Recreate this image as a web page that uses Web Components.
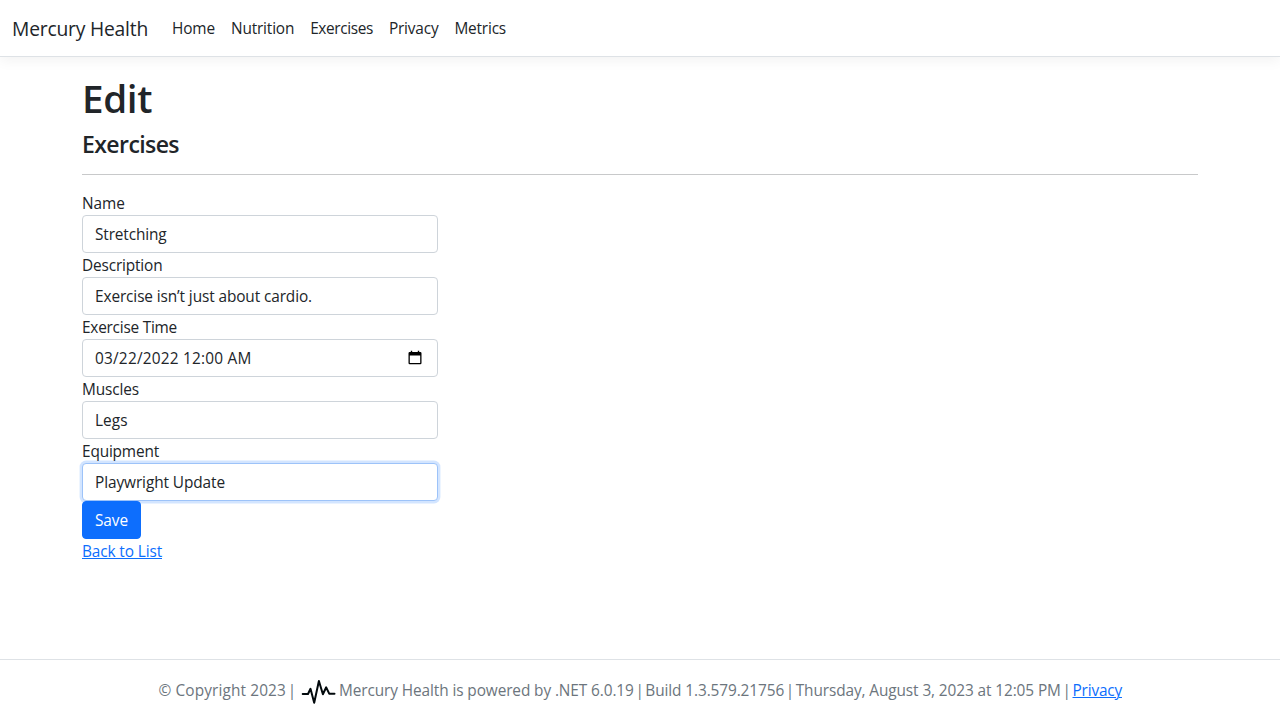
<!DOCTYPE html>
<html lang="en">
<head>
<meta charset="utf-8">
<title>Edit - Mercury Health</title>
<style>
html,body{margin:0;height:100%}
body{font:15.4px/24px "Open Sans","Noto Sans",sans-serif;color:#212529;background:#fff}
</style>
</head>
<body>
<mh-app></mh-app>
<script>
const define = (name, html, after) => customElements.define(name, class extends HTMLElement {
  constructor() {
    super();
    const t = document.createElement('template');
    t.innerHTML = html;
    this.attachShadow({mode: 'open'}).append(t.content.cloneNode(true));
  }
  connectedCallback() { if (after) after.call(this); }
});

/* Text run tracked so that it fills the width given in "w". */
define('mh-text', `<style>:host{display:block;width:max-content;white-space:pre;line-height:inherit;padding-top:1px;margin-bottom:-1px}</style><slot></slot>`, function () {
  const w = parseFloat(this.getAttribute('w'));
  this.style.letterSpacing = '0px';
  const natural = this.getBoundingClientRect().width;
  this.style.letterSpacing = ((w - natural) / this.textContent.length).toFixed(4) + 'px';
  this.style.width = w + 'px';
});

define('mh-navbar', `<style>
:host{display:flex;box-sizing:border-box;height:57px;padding:0 12px;align-items:center;background:#fff;border-bottom:1px solid #dee2e6;box-shadow:0 4px 12px rgba(0,0,0,.05)}
.brand{display:block;font-size:19.3px;line-height:30px;margin-right:16px}
nav{display:flex}
</style><span class="brand"><slot name="brand"></slot></span><nav><slot></slot></nav>`);

define('mh-nav-link', `<style>:host{display:block;padding:8px}a{color:inherit;text-decoration:none;display:block}</style><a href="#"><slot></slot></a>`);

define('mh-field', `<style>
:host{display:block;width:356px}
label{display:block;height:24px}
.control{display:flex;align-items:center;justify-content:space-between;box-sizing:border-box;height:38px;padding:6px 12px;border:1px solid #ced4da;border-radius:4px;background:#fff}
:host([focused]) .control{position:relative;border-color:#9dc3f9;box-shadow:0 0 0 2.4px rgba(13,110,253,.18)}
</style><label><slot name="label"></slot></label><div class="control"><slot></slot><slot name="icon"></slot></div>`);

define('mh-calendar-icon', `<style>:host{display:block;width:14px;height:16px;margin-right:3px}svg{display:block}</style>
<svg width="14" height="16" viewBox="0 0 14 16"><path fill="#000" fill-rule="evenodd" d="M2.8 .7h1.4V2h5.6V.7h1.4V2h1.1q1.2 0 1.2 1.2v9.9q0 1.2-1.2 1.2H1.7q-1.2 0-1.2-1.2V3.2Q.5 2 1.7 2h1.1zM1.8 5.5V13h10.4V5.5z"/></svg>`);

define('mh-button', `<style>:host{display:block}button{display:block;font:inherit;color:#fff;background:#0d6efd;border:1px solid #0d6efd;border-radius:4px;padding:6px 12px;height:38px;margin:0}</style><button type="button"><slot></slot></button>`);

define('mh-link', `<style>:host{display:block;width:max-content}a{display:block;color:#0d6efd;text-decoration:none}a ::slotted(*){text-decoration:underline;text-underline-offset:1px;text-decoration-thickness:1px}</style><a href="#"><slot></slot></a>`);

define('mh-pulse', `<style>:host{display:block;width:36px;height:28px}svg{display:block}</style>
<svg width="36" height="28" viewBox="300 678 36 28" fill="none" stroke="#02090c" stroke-width="2" stroke-linecap="round" stroke-linejoin="round"><path d="M302.7 694H308l2.5-5.2 3.7 14L318.9 681l4 13.3 3.3-7 3 6.4h5.3"/></svg>`);

define('mh-footer', `<style>:host{display:flex;box-sizing:border-box;height:61px;border-top:1px solid #dee2e6;color:#6c757d;padding-left:158.5px;align-items:center;line-height:60px}mh-pulse{margin:4px 3px 0 6px}.bar{margin:0 -2.3px}</style>
<mh-text w="135.5">© Copyright 2023 <span class="bar">|</span></mh-text><mh-pulse></mh-pulse><mh-text w="729.5">Mercury Health is powered by .NET 6.0.19 <span class="bar">|</span> Build 1.3.579.21756 <span class="bar">|</span> Thursday, August 3, 2023 at 12:05 PM <span class="bar">|</span></mh-text><mh-link style="margin-left:4px"><mh-text w="49.5">Privacy</mh-text></mh-link>`);

define('mh-app', `<style>
:host{display:flex;flex-direction:column;height:720px}
main{flex:1;padding:16px 82px 0}
h1,h4{margin:0 0 8px;font-weight:560;line-height:1.2}
h1{font-size:38.6px;height:48px;line-height:48px}h4{font-size:23px;height:28.8px;line-height:28.8px}
hr{margin:16px 0;border:0;height:1px;background:#c8c9ca}
</style>
<mh-navbar><mh-text slot="brand" w="136">Mercury Health</mh-text>
<mh-nav-link><mh-text w="43">Home</mh-text></mh-nav-link><mh-nav-link><mh-text w="63.2">Nutrition</mh-text></mh-nav-link><mh-nav-link><mh-text w="62.7">Exercises</mh-text></mh-nav-link><mh-nav-link><mh-text w="49.6">Privacy</mh-text></mh-nav-link><mh-nav-link><mh-text w="51.5">Metrics</mh-text></mh-nav-link>
</mh-navbar>
<main>
<h1><mh-text w="70">Edit</mh-text></h1>
<h4><mh-text w="97">Exercises</mh-text></h4>
<hr>
<mh-field><mh-text slot="label" w="43">Name</mh-text><mh-text w="71.5">Stretching</mh-text></mh-field>
<mh-field><mh-text slot="label" w="80.5">Description</mh-text><mh-text w="217">Exercise isn’t just about cardio.</mh-text></mh-field>
<mh-field><mh-text slot="label" w="95">Exercise Time</mh-text><mh-text w="156.5">03/22/2022 12:00 AM</mh-text><mh-calendar-icon slot="icon"></mh-calendar-icon></mh-field>
<mh-field><mh-text slot="label" w="57">Muscles</mh-text><mh-text w="32.5">Legs</mh-text></mh-field>
<mh-field focused><mh-text slot="label" w="77">Equipment</mh-text><mh-text w="130">Playwright Update</mh-text></mh-field>
<mh-button><mh-text w="33">Save</mh-text></mh-button>
<mh-link><mh-text w="80">Back to List</mh-text></mh-link>
</main>
<mh-footer></mh-footer>`);
</script>
</body>
</html>
